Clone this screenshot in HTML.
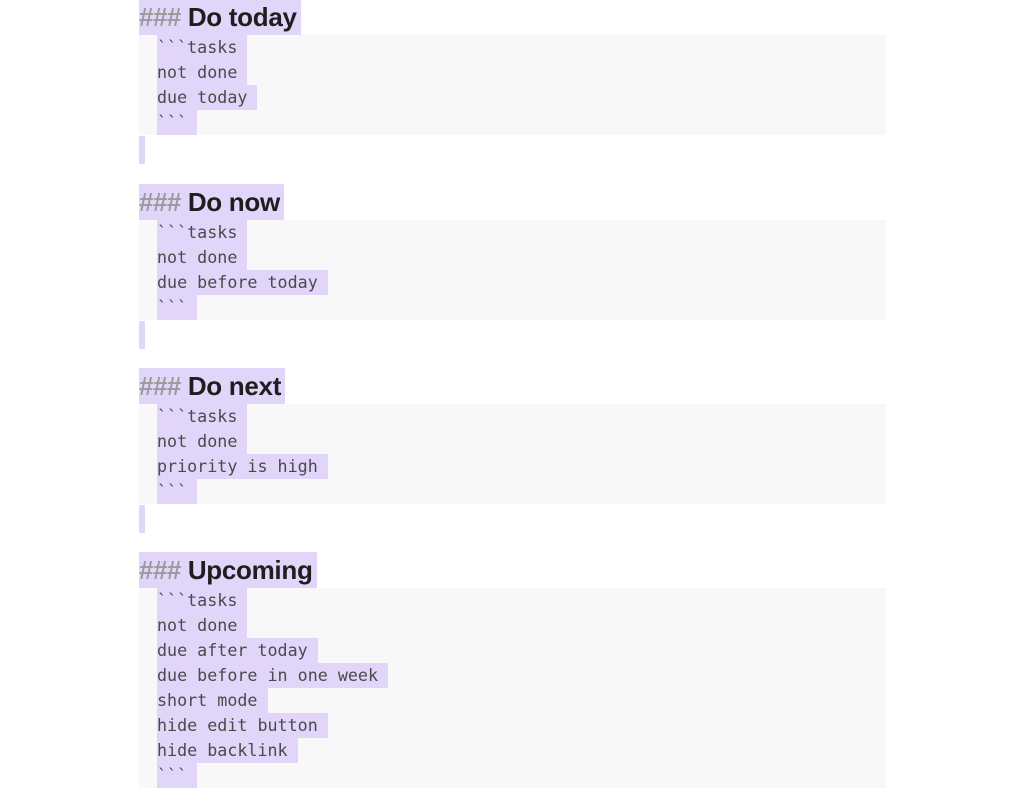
<!DOCTYPE html>
<html><head><meta charset="utf-8"><style>
html,body{margin:0;padding:0;background:#fff;overflow:hidden;width:1024px;height:768px}
.sec{position:absolute;left:139px;width:747px}
.h{height:36px;line-height:36px;font-family:"Liberation Sans",sans-serif;font-weight:bold;font-size:26px;color:#1e1e1e;letter-spacing:-0.3px}
.h span.hl{background:#e1d6fa;display:inline-block;padding-right:4px}
.h .m{color:#9a9a9a;letter-spacing:-0.5px}
.code{background:#f8f8f8;padding-left:18px}
.code div{height:25px;line-height:24px;font-family:"DejaVu Sans Mono","Liberation Mono",monospace;font-size:16.7px;color:#4a4a4a;white-space:pre}
.code span{background:#e1d6fa;display:inline-block;height:25px}
.bar{width:6px;height:28px;background:#e1d6fa;margin-top:1px}
</style></head><body>

<div class="sec" style="top:-1px">
<div class="h"><span class="hl"><span class="m">###</span> Do today</span></div>
<div class="code">
<div><span>&#96;&#96;&#96;tasks </span></div>
<div><span>not done </span></div>
<div><span>due today </span></div>
<div><span>&#96;&#96;&#96; </span></div>
</div>
<div class="bar"></div>
</div>

<div class="sec" style="top:184px">
<div class="h"><span class="hl"><span class="m">###</span> Do now</span></div>
<div class="code">
<div><span>&#96;&#96;&#96;tasks </span></div>
<div><span>not done </span></div>
<div><span>due before today </span></div>
<div><span>&#96;&#96;&#96; </span></div>
</div>
<div class="bar"></div>
</div>

<div class="sec" style="top:368px">
<div class="h"><span class="hl"><span class="m">###</span> Do next</span></div>
<div class="code">
<div><span>&#96;&#96;&#96;tasks </span></div>
<div><span>not done </span></div>
<div><span>priority is high </span></div>
<div><span>&#96;&#96;&#96; </span></div>
</div>
<div class="bar"></div>
</div>

<div class="sec" style="top:552px">
<div class="h"><span class="hl"><span class="m">###</span> Upcoming</span></div>
<div class="code">
<div><span>&#96;&#96;&#96;tasks </span></div>
<div><span>not done </span></div>
<div><span>due after today </span></div>
<div><span>due before in one week </span></div>
<div><span>short mode </span></div>
<div><span>hide edit button </span></div>
<div><span>hide backlink </span></div>
<div><span>&#96;&#96;&#96; </span></div>
</div>
</div>

</body></html>
